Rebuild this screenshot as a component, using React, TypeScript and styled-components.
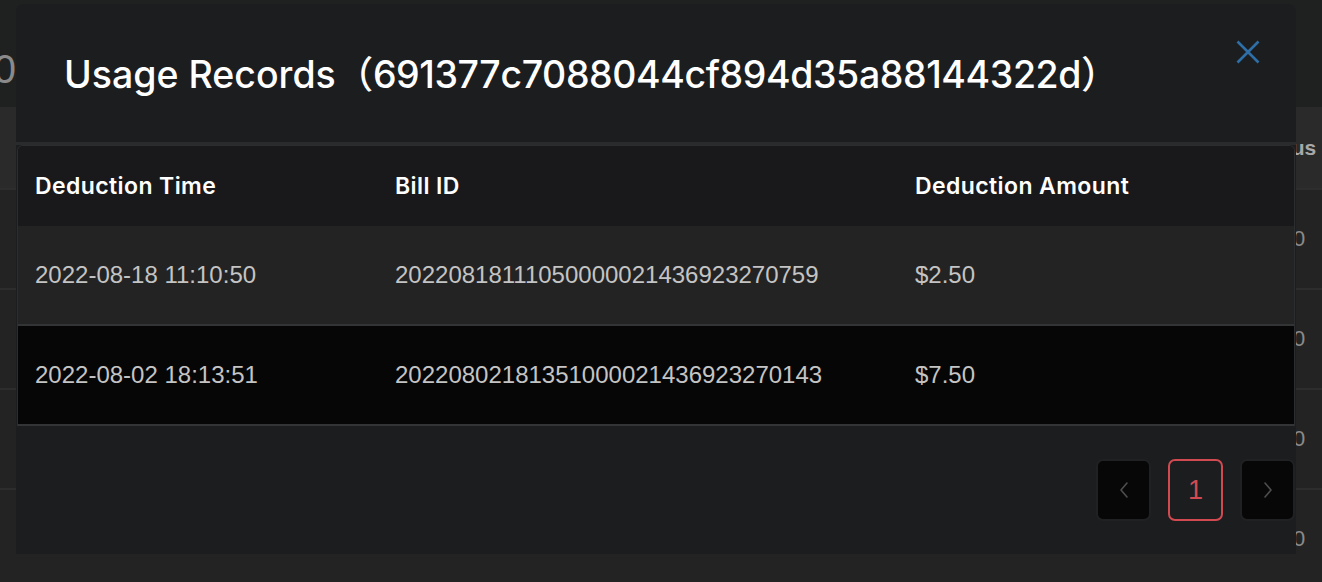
import { createGlobalStyle } from 'styled-components';
import styled from 'styled-components';

const GlobalStyle = createGlobalStyle`
  html, body {
    margin: 0;
    padding: 0;
    background: #232323;
  }
  body {
    font-family: Inter, "Noto Sans", sans-serif;
  }
`;

const Page = styled.div`
  position: relative;
  width: 1322px;
  height: 582px;
  overflow: hidden;
  background: #232323;
`;

const PageTop = styled.div`
  height: 107px;
  background: #1f2020;
  display: flex;
  align-items: center;
`;

const ClipLeft = styled.div`
  width: 16px;
  overflow: hidden;
  display: flex;
  justify-content: flex-end;
  white-space: nowrap;
  font-family: "Liberation Sans", Arial, sans-serif;
  font-size: 40px;
  color: #8a8a8a;
  margin-top: 32px;
`;

const BgRow = styled.div<{ $head?: boolean }>`
  height: ${p => (p.$head ? '81px' : '98px')};
  display: flex;
  align-items: center;
  justify-content: flex-end;
  background: ${p => (p.$head ? '#2a2a2a' : '#232323')};
  border-bottom: 2px solid #2d2d2d;
`;

const ClipRight = styled.div<{ $head?: boolean }>`
  width: 26px;
  overflow: hidden;
  white-space: nowrap;
  display: flex;
  justify-content: flex-start;
  font-family: "Liberation Sans", Arial, sans-serif;
  font-size: ${p => (p.$head ? '21px' : '22px')};
  font-weight: ${p => (p.$head ? 700 : 400)};
  color: ${p => (p.$head ? '#a8a8a8' : '#8a8a8a')};
  span {
    margin-left: ${p => (p.$head ? '-44px' : '-3px')};
  }
`;

const Modal = styled.div`
  position: absolute;
  left: 16px;
  top: 4px;
  width: 1280px;
  height: 550px;
  background: #1c1d1f;
  border-radius: 8px 8px 0 0;
  display: flex;
  flex-direction: column;
  overflow: hidden;
`;

const ModalHeader = styled.div`
  height: 138px;
  display: flex;
  justify-content: space-between;
  align-items: center;
  padding: 0 36px 0 48px;
  border-bottom: 3px solid #2a2b2d;
  box-sizing: content-box;
`;

const Title = styled.h2`
  margin: 0 0 4px;
  font-family: Inter, "Noto Sans CJK SC", sans-serif;
  font-size: 37.5px;
  font-weight: 500;
  color: #ffffff;
  white-space: nowrap;

  .title_id {
    letter-spacing: -0.4px;
  }
`;

const CloseButton = styled.button`
  align-self: flex-start;
  margin-top: 36px;
  width: 24px;
  height: 24px;
  padding: 0;
  border: none;
  background: none;
  cursor: pointer;
  color: #2d6fa6;
  svg {
    display: block;
  }
`;

const Table = styled.div`
  margin: 0 1px;
  border: 1px solid #2c2d2f;
  border-bottom: 2px solid #333435;
  border-radius: 6px 6px 0 0;
  overflow: hidden;
`;

const Row = styled.div<{ $bg: string; $head?: boolean }>`
  display: grid;
  grid-template-columns: 360px 520px 1fr;
  align-items: center;
  height: ${p => (p.$head ? '80px' : '98px')};
  background: ${p => p.$bg};
  border-top: ${p => (p.$head ? 'none' : '2px solid #333435')};
  &:nth-child(2) {
    border-top: none;
  }
`;

const HeadCell = styled.div`
  padding: 0 17px;
  font-family: Inter, sans-serif;
  font-size: 23px;
  font-weight: 600;
  letter-spacing: 0.4px;
  color: #ffffff;
`;

const Cell = styled.div`
  padding: 0 17px;
  font-family: "Liberation Sans", Arial, sans-serif;
  font-size: 24px;
  color: #c4c4c4;
`;

const Footer = styled.div`
  display: flex;
  justify-content: flex-end;
  gap: 17px;
  padding: 33px 1px 0 0;
`;

const PageButton = styled.button<{ $active?: boolean }>`
  width: 55px;
  height: 62px;
  box-sizing: border-box;
  border-radius: 7px;
  display: flex;
  align-items: center;
  justify-content: center;
  padding: 0;
  cursor: pointer;
  font-family: "Liberation Sans", Arial, sans-serif;
  font-size: 27px;
  background: ${p => (p.$active ? 'transparent' : '#070707')};
  border: 2px solid ${p => (p.$active ? '#d24a51' : '#202123')};
  color: ${p => (p.$active ? '#d24a51' : '#4d4e50')};
`;

const Chevron = ({ dir }: { dir: 'left' | 'right' }) => (
  <svg width="12" height="18" viewBox="0 0 12 18" fill="none">
    <path
      d={dir === 'left' ? 'M9 2 L3 9 L9 16' : 'M3 2 L9 9 L3 16'}
      stroke="currentColor"
      strokeWidth="1.6"
      strokeLinecap="round"
      strokeLinejoin="round"
    />
  </svg>
);

const records = [
  { time: '2022-08-18 11:10:50', bill: '20220818111050000021436923270759', amount: '$2.50', bg: '#232323' },
  { time: '2022-08-02 18:13:51', bill: '20220802181351000021436923270143', amount: '$7.50', bg: '#060606' },
];

const App = () => {
  return <>
    <GlobalStyle />
    <Page>
      <PageTop>
        <ClipLeft>$10</ClipLeft>
      </PageTop>
      <BgRow $head>
        <ClipRight $head><span>Status</span></ClipRight>
      </BgRow>
      {[0, 1, 2, 3].map(i => (
        <BgRow key={i}>
          <ClipRight><span>0</span></ClipRight>
        </BgRow>
      ))}

      <Modal>
        <ModalHeader>
          <Title>Usage Records<span className='title_id'>（691377c7088044cf894d35a88144322d）</span></Title>
          <CloseButton aria-label="Close">
            <svg width="24" height="24" viewBox="0 0 24 24" fill="none">
              <path d="M1.5 1.5 L22.5 22.5 M22.5 1.5 L1.5 22.5" stroke="currentColor" strokeWidth="2.6" />
            </svg>
          </CloseButton>
        </ModalHeader>

        <Table>
          <Row $head $bg="#19191b">
            <HeadCell>Deduction Time</HeadCell>
            <HeadCell>Bill ID</HeadCell>
            <HeadCell>Deduction Amount</HeadCell>
          </Row>
          {records.map(r => (
            <Row key={r.bill} $bg={r.bg}>
              <Cell>{r.time}</Cell>
              <Cell>{r.bill}</Cell>
              <Cell>{r.amount}</Cell>
            </Row>
          ))}
        </Table>

        <Footer>
          <PageButton aria-label="Previous"><Chevron dir="left" /></PageButton>
          <PageButton $active>1</PageButton>
          <PageButton aria-label="Next"><Chevron dir="right" /></PageButton>
        </Footer>
      </Modal>
    </Page>
  </>;
}

export default App;
